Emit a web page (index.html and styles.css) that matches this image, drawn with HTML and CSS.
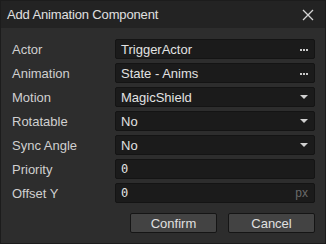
FILE: index.html
```html
<!DOCTYPE html>
<html lang="en">
<head>
    <meta charset="UTF-8">
    <title>Add Animation Component</title>
    <link rel="stylesheet" href="styles.css">
</head>
<body>
    <div class="dialog">
        <div class="titlebar">
            <span class="title">Add Animation Component</span>
            <svg class="close" width="12" height="12" viewBox="0 0 12 12">
                <path d="M1 1L11 11M11 1L1 11" stroke="#d4d4d4" stroke-width="1.3" fill="none"/>
            </svg>
        </div>

        <div class="fields">
            <label>Actor</label>
            <div class="box">TriggerActor<span class="dots"><i></i><i></i><i></i></span></div>

            <label>Animation</label>
            <div class="box">State - Anims<span class="dots"><i></i><i></i><i></i></span></div>

            <label>Motion</label>
            <div class="box">MagicShield<span class="arrow"></span></div>

            <label>Rotatable</label>
            <div class="box">No<span class="arrow"></span></div>

            <label>Sync Angle</label>
            <div class="box">No<span class="arrow"></span></div>

            <label>Priority</label>
            <div class="box num">0</div>

            <label>Offset Y</label>
            <div class="box num">0<span class="unit">px</span></div>
        </div>

        <div class="buttons">
            <button class="btn">Confirm</button>
            <button class="btn">Cancel</button>
        </div>
    </div>
</body>
</html>
```

FILE: styles.css
```css
body {
    margin: 0;
    padding: 0;
    background-color: #2d2d2d;
    font-family: "Liberation Sans", Arial, sans-serif;
    font-size: 13px;
    color: #d8d8d8;
}
.dialog {
    width: 326px;
    height: 244px;
    box-sizing: border-box;
    border: 1px solid #1c1c1c;
    background-color: #2d2d2d;
}
.titlebar {
    height: 27px;
    display: flex;
    align-items: center;
    justify-content: space-between;
    padding: 0 11px 0 6px;
    background-color: #232323;
}
.title {
    font-size: 13px;
    letter-spacing: -0.15px;
    color: #e0e0e0;
}
.fields {
    display: grid;
    grid-template-columns: 103px 1fr;
    grid-auto-rows: 20px;
    row-gap: 4px;
    padding: 11px 10px 0 11px;
}
label {
    display: flex;
    align-items: center;
    color: #d0d0d0;
}
.box {
    display: flex;
    align-items: center;
    justify-content: space-between;
    padding: 0 6px 0 5px;
    background-color: #1b1b1b;
    border: 1px solid #141414;
    border-radius: 2px;
    color: #e2e2e2;
}
.num {
    font-family: "DejaVu Sans Mono", monospace;
    font-size: 12px;
}
.dots {
    display: flex;
    gap: 1px;
    margin-top: 2px;
}
.dots i {
    width: 2px;
    height: 2px;
    background-color: #c8c8c8;
}
.arrow {
    width: 0;
    height: 0;
    border-left: 4px solid transparent;
    border-right: 4px solid transparent;
    border-top: 4px solid #d0d0d0;
}
.unit {
    font-family: "Liberation Sans", Arial, sans-serif;
    font-size: 12px;
    color: #6a6a6a;
}
.buttons {
    display: flex;
    justify-content: flex-end;
    gap: 11px;
    padding: 10px 10px 0 0;
}
.btn {
    width: 87px;
    height: 20px;
    padding: 0;
    font-family: "Liberation Sans", Arial, sans-serif;
    font-size: 13px;
    color: #e0e0e0;
    background-color: #434343;
    border: 1px solid #151515;
    border-radius: 2px;
}
```
